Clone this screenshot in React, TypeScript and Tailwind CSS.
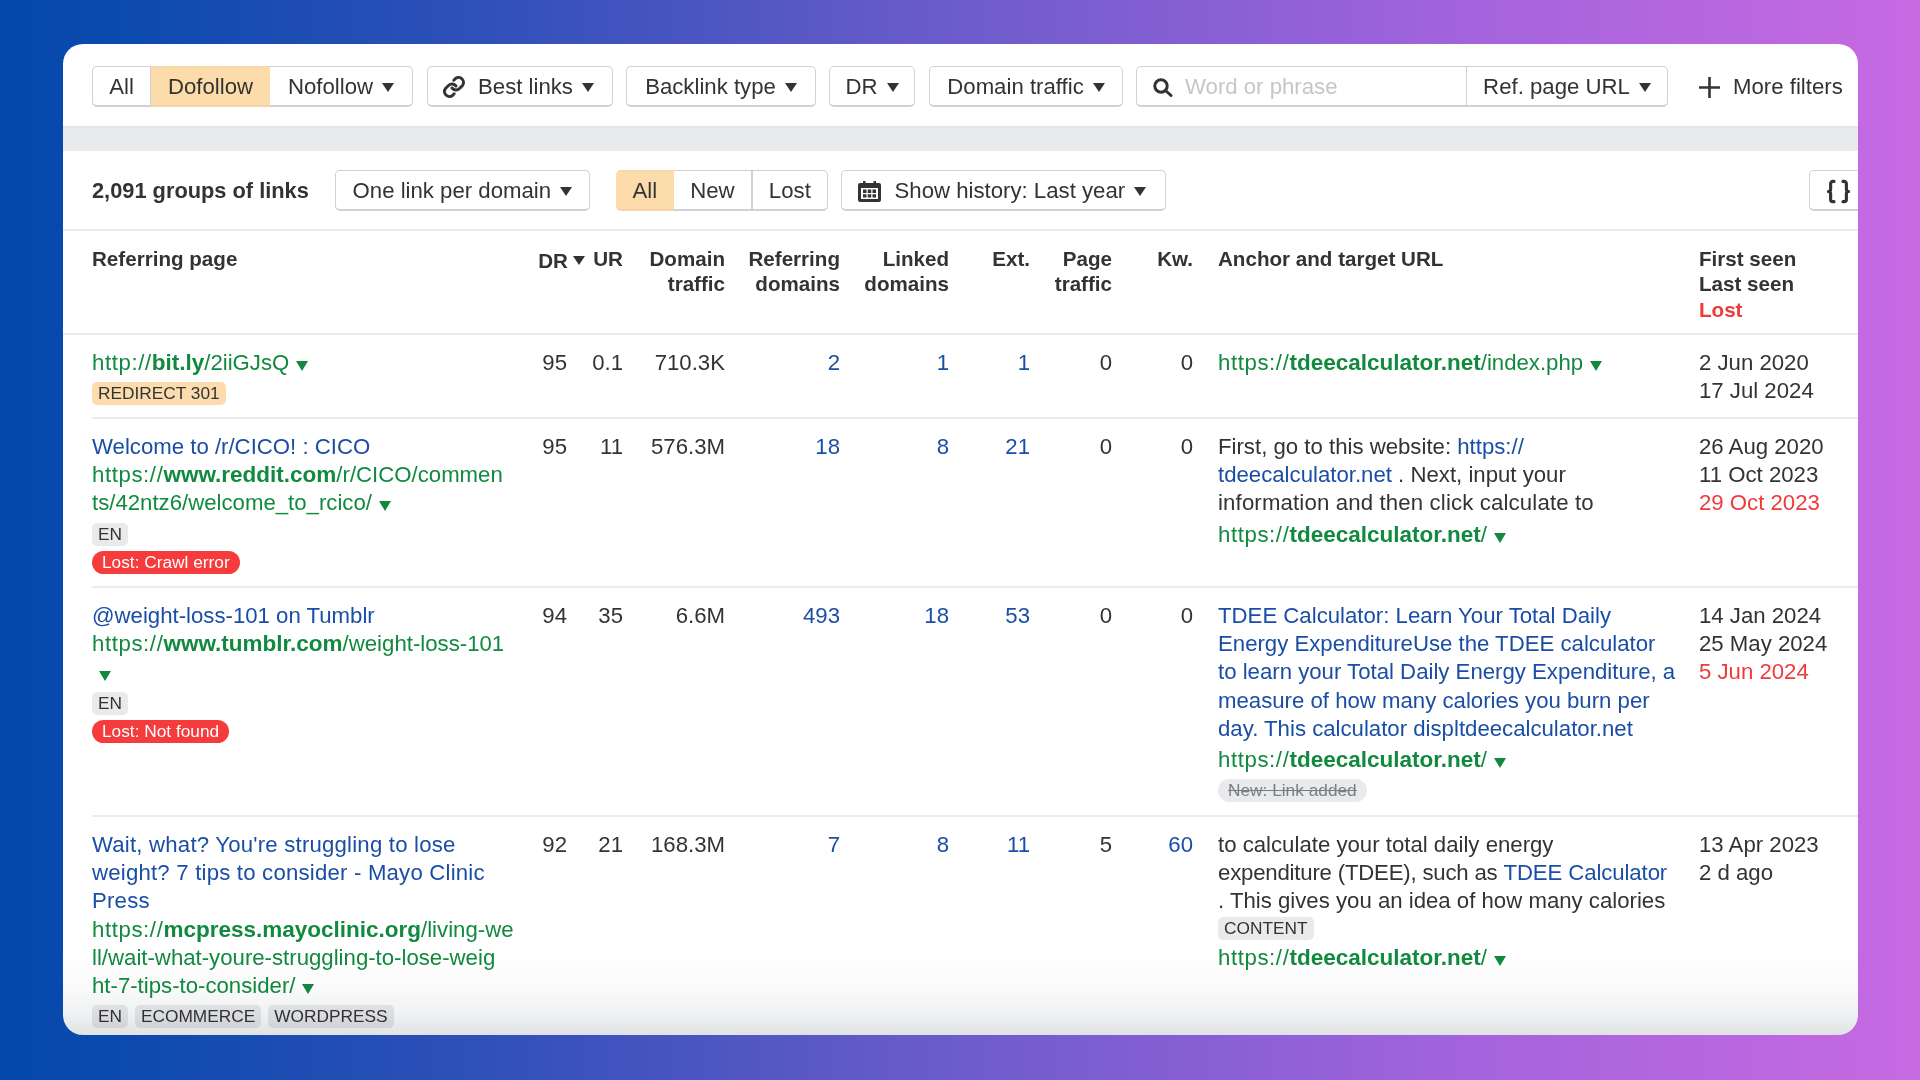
import React from "react";
import { Braces } from "lucide-react";

const Caret = ({ className = "text-[#333333]" }: { className?: string }) => (
  <svg viewBox="0 0 12 9" className={`inline-block w-[12px] h-[9px] ${className}`} fill="currentColor">
    <path d="M0 0h12L6 9z" />
  </svg>
);

const SmallCaret = () => (
  <svg viewBox="0 0 12 10" className="inline-block w-[12px] h-[10px] ml-[7px] text-[#118a3f] align-[-1px]" fill="currentColor">
    <path d="M0 0h12L6 10z" />
  </svg>
);

const btn = "h-[41px] pt-[2px] flex items-center bg-white border border-[#cfd1d4] border-b-2 text-[#333333] whitespace-nowrap";

const Btn = ({ w, children }: { w: string; children: React.ReactNode }) => (
  <div className={`${btn} rounded-[5px] justify-center gap-[9px] ${w}`}>{children}</div>
);

const LinkIcon = () => (
  <svg viewBox="0 0 24 24" className="w-[24px] h-[24px]" fill="none" stroke="#333333" strokeWidth="3" strokeLinecap="round" strokeLinejoin="round">
    <path d="M10 13a5 5 0 0 0 7.500.500l3-3a5 5 0 0 0-7-7l-1.700 1.700" />
    <path d="M14 11a5 5 0 0 0-7.500-.500l-3 3a5 5 0 0 0 7 7l1.700-1.700" />
  </svg>
);

const CalendarIcon = () => (
  <svg viewBox="0 0 23 21" className="w-[23px] h-[21px]" fill="#333333">
    <path d="M5 0h2.500v2h8V0H18v2h3a2 2 0 0 1 2 2v15a2 2 0 0 1-2 2H2a2 2 0 0 1-2-2V4a2 2 0 0 1 2-2h3z" />
    <path fill="#fff" d="M3 7h17v11H3z" />
    <path d="M5 8.500h3.500V12H5zM9.750 8.500h3.500V12h-3.500zM14.500 8.500H18V12h-3.500zM5 13.200h3.500v3.300H5zM9.750 13.200h3.500v3.300h-3.500zM14.500 13.200H18v3.300h-3.500z" />
  </svg>
);

const SearchIcon = () => (
  <svg viewBox="0 0 20 19" className="w-[20px] h-[19px]" fill="none" stroke="#333333" strokeWidth="3">
    <circle cx="8" cy="8" r="6.200" />
    <path d="M12.500 12.500l5.500 5" strokeLinecap="round" />
  </svg>
);

const Tag = ({ children, className = "bg-[#e9eaec] text-[#333333]" }: { children: React.ReactNode; className?: string }) => (
  <span className={`inline-block h-[23px] leading-[22px] px-[6px] rounded-[5px] text-[17.3px] whitespace-nowrap ${className}`}>{children}</span>
);

const Pill = ({ children, className }: { children: React.ReactNode; className: string }) => (
  <span className={`inline-block h-[23px] leading-[22px] px-[10px] rounded-full text-[17.3px] whitespace-nowrap ${className}`}>{children}</span>
);

const Url = ({ pre, bold, post, caret = true }: { pre: string; bold: string; post?: React.ReactNode; caret?: boolean }) => (
  <span className="text-[#118a3f] whitespace-nowrap">
    <span className="tracking-[0.6px]">{pre}</span>
    <b className="font-bold text-[22.5px]">{bold}</b>
    {post}
    {caret && <SmallCaret />}
  </span>
);

const A = ({ children }: { children: React.ReactNode }) => <span className="text-[#1a4ea6]">{children}</span>;

const rowGrid =
  "grid grid-cols-[419px_56px_56px_102px_115px_109px_81px_82px_81px_481px_160px] pl-[29px]";

const Num = ({ children, blue }: { children: React.ReactNode; blue?: boolean }) => (
  <div className={`text-right ${blue ? "text-[#1a4ea6]" : ""}`}>{children}</div>
);

type RowP = {
  page: React.ReactNode;
  nums: [string, string, string, string, string, string, string, string];
  blue: boolean[];
  anchor: React.ReactNode;
  dates: React.ReactNode;
  h: string;
};

const Row = ({ page, nums, blue, anchor, dates, h }: RowP) => (
  <div className={`${h} pt-[14px] ${rowGrid}`}>
    <div>{page}</div>
    {nums.map((n, i) => (
      <Num key={i} blue={blue[i]}>
        {n}
      </Num>
    ))}
    <div className="pl-[25px] whitespace-nowrap">{anchor}</div>
    <div className="pl-[25px] whitespace-nowrap">{dates}</div>
  </div>
);

const Sep = () => <div className="h-[2px] ml-[29px] bg-[#eaebed]" />;

export default function App() {
  return (
    <div
      className="w-[1920px] h-[1080px] overflow-hidden pt-[44px] pl-[63px] bg-[linear-gradient(90deg,#0448ad_0%,#0b4aae_6%,#2f50b9_25%,#6d5ccb_50%,#a163dc_75%,#c76ae2_100%)]"
      style={{ fontFamily: '"Liberation Sans", Arial, sans-serif' }}
    >
      <div className="relative w-[1795px] h-[991px] bg-white rounded-[20px] overflow-hidden text-[22.2px] leading-[28.2px] text-[#333333]">
        {/* Filter bar */}
        <div className="h-[84px] pt-[22px] pl-[29px] flex items-start border-b-2 border-[#e4e5e8]">
          <div className="flex rounded-[5px]">
            <div className={`${btn} rounded-l-[5px] w-[59px] justify-center`}>All</div>
            <div className="h-[41px] pt-[2px] w-[119px] flex items-center justify-center bg-[#fddcab] border-y border-b-2 border-[#f5d5a8] text-[#333333]">Dofollow</div>
            <div className={`${btn} rounded-r-[5px] border-l-0 w-[143px] justify-center gap-[9px]`}>
              Nofollow <Caret />
            </div>
          </div>
          <div className="ml-[14px]">
            <Btn w="w-[186px]">
              <span className="flex mr-[3px] ml-[-4px]">
                <LinkIcon />
              </span>{" "}
              Best links <Caret />
            </Btn>
          </div>
          <div className="ml-[13px]">
            <Btn w="w-[190px]">
              Backlink type <Caret />
            </Btn>
          </div>
          <div className="ml-[13px]">
            <Btn w="w-[86px]">
              DR <Caret />
            </Btn>
          </div>
          <div className="ml-[14px]">
            <Btn w="w-[194px]">
              Domain traffic <Caret />
            </Btn>
          </div>
          <div className="ml-[13px] flex">
            <div className={`${btn} rounded-l-[5px] w-[331px] pl-[16px] gap-[12px]`}>
              <SearchIcon />
              <span className="text-[#c4c6ca]">Word or phrase</span>
            </div>
            <div className={`${btn} rounded-r-[5px] border-l-0 w-[201px] justify-center gap-[9px]`}>
              Ref. page URL <Caret />
            </div>
          </div>
          <div className="ml-[31px] flex items-center h-[41px] pt-[1px] gap-[13px] whitespace-nowrap">
            <svg viewBox="0 0 21 21" className="w-[21px] h-[21px]" fill="#333333">
              <path d="M9.200 0h2.600v9.200H21v2.600h-9.200V21H9.200v-9.200H0V9.200h9.200z" />
            </svg>
            More filters
          </div>
        </div>
        <div className="h-[23px] bg-[#e9eaec]" />

        {/* Toolbar */}
        <div className="h-[80px] pt-[19px] pl-[29px] flex items-start border-b-2 border-[#eaebed] relative">
          <div className="h-[41px] pt-[1px] flex items-center font-bold whitespace-nowrap text-[21.8px]">2,091 groups of links</div>
          <div className="ml-[26px]">
            <Btn w="w-[255px]">
              One link per domain <Caret />
            </Btn>
          </div>
          <div className="ml-[26px] flex">
            <div className="h-[41px] pt-[2px] w-[58px] flex items-center justify-center bg-[#fddcab] rounded-l-[5px] border-y border-b-2 border-[#f5d5a8]">All</div>
            <div className={`${btn} border-l-0 w-[78px] justify-center`}>New</div>
            <div className={`${btn} rounded-r-[5px] border-l-[1px] w-[76px] justify-center`}>Lost</div>
          </div>
          <div className="ml-[13px]">
            <Btn w="w-[325px]">
              <span className="mr-[5px] ml-[-3px] flex">
                <CalendarIcon />
              </span>{" "}
              Show history: Last year <Caret />
            </Btn>
          </div>
          <div className={`${btn} absolute right-[-9px] top-[19px] w-[58px] rounded-[5px] justify-center`}>
            <Braces size={27} strokeWidth={2.8} color="#333333" />
          </div>
        </div>

        {/* Header */}
        <div className={`h-[104px] pt-[15px] font-bold text-[20.6px] leading-[25.4px] border-b-2 border-[#eaebed] ${rowGrid}`}>
          <div>Referring page</div>
          <div className="text-right whitespace-nowrap mr-[-18px]">
            DR
            <span className="ml-[5px] inline-block align-[2px]">
              <Caret />
            </span>
          </div>
          <div className="text-right">UR</div>
          <div className="text-right">
            Domain
            <br />
            traffic
          </div>
          <div className="text-right">
            Referring
            <br />
            domains
          </div>
          <div className="text-right">
            Linked
            <br />
            domains
          </div>
          <div className="text-right">Ext.</div>
          <div className="text-right">
            Page
            <br />
            traffic
          </div>
          <div className="text-right">Kw.</div>
          <div className="pl-[25px]">Anchor and target URL</div>
          <div className="pl-[25px]">
            First seen
            <br />
            Last seen
            <br />
            <span className="text-[#f03a3a]">Lost</span>
          </div>
        </div>

        {/* Rows */}
        <Row
          h="h-[82px]"
          page={
            <>
              <Url pre="http://" bold="bit.ly" post="/2iiGJsQ" />
              <div className="mt-[5px] leading-[0]">
                <Tag className="bg-[#fcdcae] text-[#333333]">REDIRECT 301</Tag>
              </div>
            </>
          }
          nums={["95", "0.1", "710.3K", "2", "1", "1", "0", "0"]}
          blue={[false, false, false, true, true, true, false, false]}
          anchor={<Url pre="https://" bold="tdeecalculator.net" post="/index.php" />}
          dates={
            <>
              2 Jun 2020
              <br />
              17 Jul 2024
            </>
          }
        />
        <Sep />
        <Row
          h="h-[167px]"
          page={
            <>
              <A>Welcome to /r/CICO! : CICO</A>
              <br />
              <Url
                pre="https://"
                bold="www.reddit.com"
                post={
                  <>
                    /r/CICO/commen
                    <br />
                    ts/42ntz6/welcome_to_rcico/
                  </>
                }
              />
              <div className="mt-[5px] leading-[0]">
                <Tag>EN</Tag>
              </div>
              <div className="mt-[5px] leading-[0]">
                <Pill className="bg-[#f53b3b] text-white">Lost: Crawl error</Pill>
              </div>
            </>
          }
          nums={["95", "11", "576.3M", "18", "8", "21", "0", "0"]}
          blue={[false, false, false, true, true, true, false, false]}
          anchor={
            <>
              First, go to this website: <A>https://</A>
              <br />
              <A>tdeecalculator.net</A> . Next, input your
              <br />
              <span className="tracking-[0.15px]">information and then click calculate to</span>
              <div className="mt-[3px]">
                <Url pre="https://" bold="tdeecalculator.net" post="/" />
              </div>
            </>
          }
          dates={
            <>
              26 Aug 2020
              <br />
              11 Oct 2023
              <br />
              <span className="text-[#f03a3a]">29 Oct 2023</span>
            </>
          }
        />
        <Sep />
        <Row
          h="h-[227px]"
          page={
            <>
              <A>@weight-loss-101 on Tumblr</A>
              <br />
              <Url pre="https://" bold="www.tumblr.com" post="/weight-loss-101" caret={false} />
              <br />
              <span className="relative top-[1px]">
                <SmallCaret />
              </span>
              <div className="mt-[5px] leading-[0]">
                <Tag>EN</Tag>
              </div>
              <div className="mt-[5px] leading-[0]">
                <Pill className="bg-[#f53b3b] text-white">Lost: Not found</Pill>
              </div>
            </>
          }
          nums={["94", "35", "6.6M", "493", "18", "53", "0", "0"]}
          blue={[false, false, false, true, true, true, false, false]}
          anchor={
            <>
              <A>
                TDEE Calculator: Learn Your Total Daily
                <br />
                Energy ExpenditureUse the TDEE calculator
                <br />
                to learn your Total Daily Energy Expenditure, a
                <br />
                measure of how many calories you burn per
                <br />
                day. This calculator displtdeecalculator.net
              </A>
              <div className="mt-[3px]">
                <Url pre="https://" bold="tdeecalculator.net" post="/" />
              </div>
              <div className="mt-[5px] leading-[0]">
                <Pill className="bg-[#e9eaec] text-[#7b7d80] line-through">New: Link added</Pill>
              </div>
            </>
          }
          dates={
            <>
              14 Jan 2024
              <br />
              25 May 2024
              <br />
              <span className="text-[#f03a3a]">5 Jun 2024</span>
            </>
          }
        />
        <Sep />
        <Row
          h="h-[220px]"
          page={
            <>
              <span className="tracking-[0.2px]">
                <A>
                  Wait, what? You're struggling to lose
                  <br />
                  weight? 7 tips to consider - Mayo Clinic
                  <br />
                  Press
                </A>
              </span>
              <br />
              <Url
                pre="https://"
                bold="mcpress.mayoclinic.org"
                post={
                  <>
                    /living-we
                    <br />
                    ll/wait-what-youre-struggling-to-lose-weig
                    <br />
                    ht-7-tips-to-consider/
                  </>
                }
              />
              <div className="mt-[5px] leading-[0] flex gap-[7px]">
                <Tag>EN</Tag>
                <Tag>ECOMMERCE</Tag>
                <Tag>WORDPRESS</Tag>
              </div>
            </>
          }
          nums={["92", "21", "168.3M", "7", "8", "11", "5", "60"]}
          blue={[false, false, false, true, true, true, false, true]}
          anchor={
            <>
              to calculate your total daily energy
              <br />
              <span className="tracking-[-0.2px]">expenditure (TDEE), such as </span>
              <span className="tracking-[-0.1px]">
                <A>TDEE Calculator</A>
              </span>
              <br />. This gives you an idea of how many calories
              <div className="leading-[0] mt-[1px]">
                <Tag>CONTENT</Tag>
              </div>
              <div className="mt-[4px]">
                <Url pre="https://" bold="tdeecalculator.net" post="/" />
              </div>
            </>
          }
          dates={
            <>
              13 Apr 2023
              <br />2 d ago
            </>
          }
        />

        {/* Bottom fade over the table */}
        <div className="absolute left-0 right-0 bottom-0 h-[85px] pointer-events-none mix-blend-multiply bg-[linear-gradient(180deg,#ffffff_0%,#fafafb_45%,#f0f1f2_75%,#e1e2e4_100%)]" />
      </div>
    </div>
  );
}
